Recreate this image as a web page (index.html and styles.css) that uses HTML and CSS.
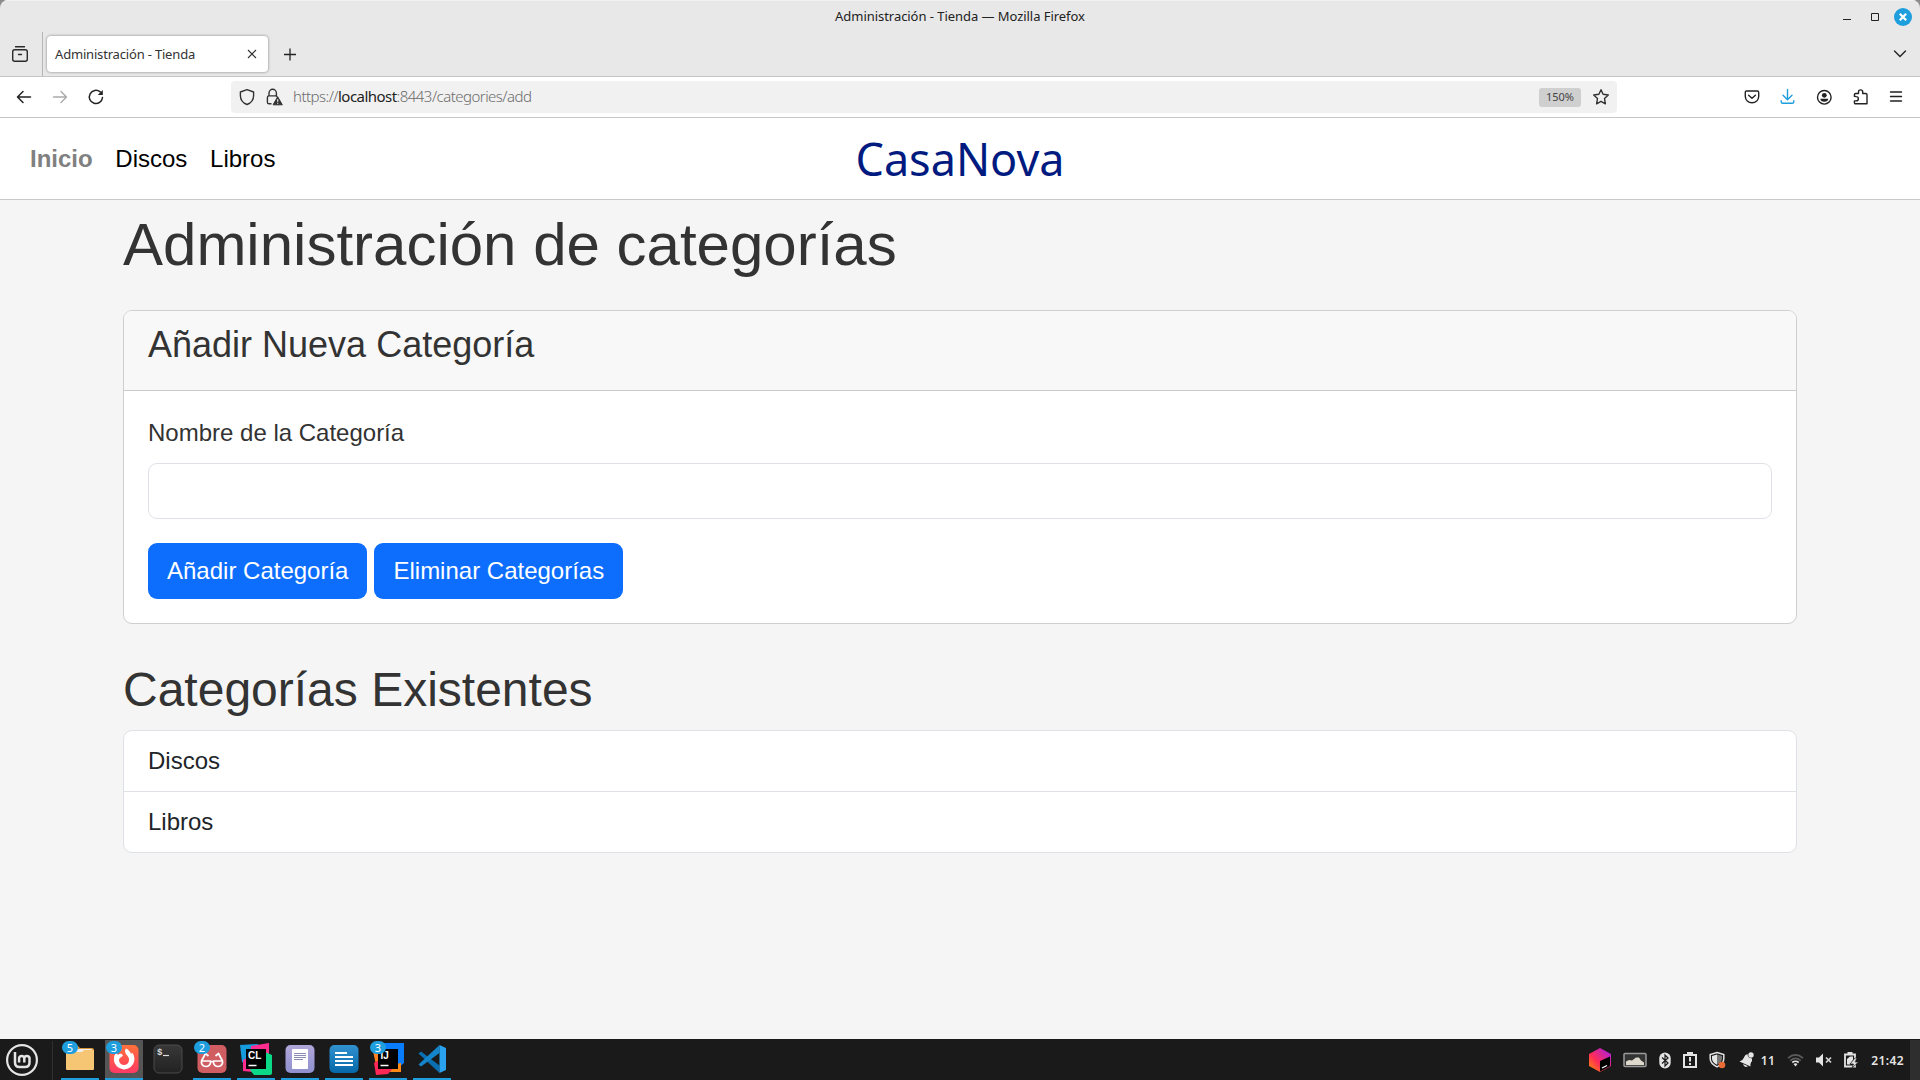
FILE: index.html
```html
<!DOCTYPE html>
<html lang="es">
<head>
<meta charset="utf-8">
<title>Administración - Tienda</title>
<link rel="stylesheet" href="styles.css">
</head>
<body>
<div class="screen">
  <div class="window">
    <header class="titlebar">
      <span class="title">Administración - Tienda — Mozilla Firefox</span>
      <div class="controls">
        <svg width="20" height="20" viewBox="0 0 20 20"><path d="M6 12.5h8" stroke="#222" fill="none"/></svg>
        <svg width="20" height="20" viewBox="0 0 20 20"><path d="M6.5 6.5h7v7h-7z" stroke="#222" fill="none"/></svg>
        <svg width="20" height="20" viewBox="0 0 20 20"><circle cx="10" cy="10" r="9" fill="#1f9ede"/><path d="M6.8 6.8l6.4 6.4M13.2 6.8l-6.4 6.4" stroke="#fff" stroke-width="2.2"/></svg>
      </div>
    </header>
    <div class="tabs">
      <div class="tabs-view"><svg width="20" height="20" viewBox="0 0 20 20" fill="none" stroke="#2a2a2a" stroke-width="1.4" stroke-linecap="round"><path d="M5.5 2.7h9"/><rect x="2.7" y="5.7" width="14.6" height="11.6" rx="2"/><path d="M8.500 10.500h3"/></svg></div>
      <div class="tab"><span class="tab-label">Administración - Tienda</span><svg width="12" height="12" viewBox="0 0 12 12" stroke="#333" stroke-width="1.1" fill="none"><path d="M2 2l8 8M10 2l-8 8"/></svg></div>
      <svg class="new-tab" width="14" height="14" viewBox="0 0 14 14" stroke="#222" stroke-width="1.3" fill="none"><path d="M1 7.500h12M7 1.500v12"/></svg>
      <svg class="all-tabs" width="16" height="16" viewBox="0 0 16 16" stroke="#222" stroke-width="1.4" fill="none" stroke-linecap="round"><path d="M2.500 5l5.500 5.500L13.500 5"/></svg>
    </div>
    <div class="toolbar">
      <div class="nav-buttons">
        <svg width="20" height="20" viewBox="0 0 20 20" fill="none" stroke="#222" stroke-width="1.5" stroke-linecap="round" stroke-linejoin="round"><path d="M16.500 10h-13M9 4.500L3.500 10 9 15.500"/></svg>
        <svg width="20" height="20" viewBox="0 0 20 20" fill="none" stroke="#aaa" stroke-width="1.400" stroke-linecap="round" stroke-linejoin="round"><path d="M3.500 10h13M11 4.500l5.500 5.500-5.500 5.500"/></svg>
        <svg width="20" height="20" viewBox="0 0 20 20" fill="none" stroke="#222" stroke-width="1.500" stroke-linecap="round"><path d="M16.500 10.500a6.600 6.600 0 1 1-2.300-5.600"/><path d="M16.800 3v5h-5z" fill="#222" stroke="none"/></svg>
      </div>
      <div class="urlbar">
        <svg width="20" height="20" viewBox="0 0 20 20" fill="none" stroke="#333" stroke-width="1.400" stroke-linejoin="round"><path d="M10 2.600L16.600 5v3.800c0 4-2.600 7.200-6.600 8.700-4-1.500-6.600-4.700-6.600-8.700V5z"/></svg>
        <svg width="20" height="20" viewBox="0 0 20 20" fill="none" stroke="#333" stroke-width="1.400"><path d="M7.500 16.800H5q-1.600 0-1.600-1.600V10.500q0-1.600 1.600-1.600h6.500q1.500 0 1.700 1.300M5 8.900V6a3.700 3.700 0 0 1 7.400 0v2.900"/><path d="M13.700 9.800l4.600 8H9.100z" fill="#333" stroke-linejoin="round" stroke-width="1"/><path d="M13.700 12.200v2.500M13.700 15.700v1" stroke="#f1f1f1" stroke-width="1.200"/></svg>
        <span class="url">https://<b>localhost</b>:8443/categories/add</span>
        <span class="zoom">150%</span>
        <svg width="20" height="20" viewBox="0 0 20 20" fill="none" stroke="#333" stroke-width="1.400" stroke-linejoin="round"><path d="M10 2.700l2.100 4.600 5.200.7-3.800 3.600.9 5.200L10 14.300l-4.400 2.500.9-5.200L2.700 8l5.200-.7z"/></svg>
      </div>
      <div class="tools">
        <svg width="20" height="20" viewBox="0 0 20 20" fill="none" stroke="#222" stroke-width="1.400" stroke-linecap="round" stroke-linejoin="round"><path d="M4.700 4h10.600q1.400 0 1.400 1.400v4.200a6.700 6.200 0 0 1-13.400 0V5.400Q3.300 4 4.700 4z"/><path d="M6.600 8.300L10 11.300l3.400-3"/></svg>
        <svg width="20" height="20" viewBox="0 0 20 20" fill="none" stroke="#1f9ede" stroke-width="1.400" stroke-linecap="round" stroke-linejoin="round"><path d="M9.500 2.500v10M5 8.200l4.500 4.500L14 8.200M3.200 13.800v1q0 1.500 1.500 1.500h9.600q1.500 0 1.500-1.500v-1"/></svg>
        <svg width="20" height="20" viewBox="0 0 20 20"><circle cx="10.300" cy="10.300" r="6.800" fill="none" stroke="#222" stroke-width="1.400"/><circle cx="10.300" cy="8.300" r="2.400" fill="#222"/><path d="M6.300 11.700h8q-.3 3-4 3.100-3.700-.1-4-3.100z" fill="#222"/></svg>
        <svg width="20" height="20" viewBox="0 0 20 20" fill="none" stroke="#222" stroke-width="1.400" stroke-linejoin="round"><path d="M4.400 9.300V7.700q0-1.200 1.200-1.200h2.900V5a2 2 0 0 1 4.200 0v1.500h3q1.300 0 1.300 1.200v9.100H5.500q-1.100 0-1.100-1.200v-1.700h1.800a1.900 1.900 0 0 0 0-4.300z"/></svg>
        <svg width="20" height="20" viewBox="0 0 20 20" fill="none" stroke="#222" stroke-width="1.400" stroke-linecap="round"><path d="M4.500 5h11M4.500 9.500h11M4.500 14h11"/></svg>
      </div>
    </div>
    <main class="page">
      <nav class="site-nav">
        <div class="links"><a class="active">Inicio</a><a>Discos</a><a>Libros</a></div>
        <span class="brand">CasaNova</span>
        <div class="links"></div>
      </nav>
      <div class="container">
        <h1>Administración de categorías</h1>
        <section class="card">
          <div class="card-header"><h3>Añadir Nueva Categoría</h3></div>
          <form class="card-body">
            <label for="name">Nombre de la Categoría</label>
            <input id="name" type="text">
            <div class="actions"><button type="button">Añadir Categoría</button><button type="button">Eliminar Categorías</button></div>
          </form>
        </section>
        <h2>Categorías Existentes</h2>
        <ul class="list"><li>Discos</li><li>Libros</li></ul>
      </div>
    </main>
  </div>
  <footer class="panel">
    <svg class="menu" width="34" height="34" viewBox="0 0 34 34" fill="none" stroke="#e4e4e4"><circle cx="17" cy="17" r="14.900" stroke-width="2.200"/><path d="M10 9v10.500q0 4.500 4.500 4.500h5.500q4.500 0 4.500-4.500V15a2.700 2.700 0 0 0-5.200 0v4.500M19.300 19.500V15a2.700 2.700 0 0 0-5.200 0v4.500" stroke-width="2.500"/></svg>
    <div class="tasks">
      <div class="task open"><svg width="30" height="30" viewBox="0 0 30 30"><path d="M1 3q0-2 2-2h9l3 3h12q2 0 2 2v5H1z" fill="#d8973a"/><rect x="3" y="5" width="24" height="6" rx="1" fill="#eee"/><path d="M1 8h16l2-2h10v19q0 1-1 1H2q-1 0-1-1z" fill="#f7c675"/></svg><i class="count">5</i></div>
      <div class="task open focused"><svg width="30" height="30" viewBox="0 0 30 30"><defs><linearGradient id="ff" x1="0" y1="0" x2="0" y2="1"><stop offset="0" stop-color="#ff7139"/><stop offset="1" stop-color="#ff3a65"/></linearGradient></defs><rect x=".5" y="1" width="29" height="28" rx="5" fill="url(#ff)"/><path d="M17 4.500q4 2 5 5.500l1-1.500q3 3.500 2.300 8a10.300 10.300 0 0 1-20.500-1q0-4 2.700-7.500l1.300 3q1.500-1.500 3.700-1.300l1.500 1.800-1.500 1.500q-2 .5-2.500 2.500a5 5 0 0 0 10 1q.3-3-1.800-5-1.800-2-2.200-4-.3-1.600 1-3z" fill="#fff"/></svg><i class="count">3</i></div>
      <div class="task"><svg width="30" height="30" viewBox="0 0 30 30"><defs><linearGradient id="te" x1="0" y1="0" x2="0" y2="1"><stop offset="0" stop-color="#383838"/><stop offset="1" stop-color="#222"/></linearGradient></defs><rect x="1" y="1" width="28" height="28" rx="5" fill="url(#te)" stroke="#4a4a4a"/><text x="4" y="11" class="prompt">$</text><path d="M10 11.500h6" stroke="#ddd" stroke-width="1.200"/></svg></div>
      <div class="task open"><svg width="30" height="30" viewBox="0 0 30 30"><rect x=".5" y="1" width="29" height="28" rx="5" fill="#cf5d61"/><g fill="none" stroke="#fff" stroke-width="1.700" stroke-linejoin="round"><path d="M4.500 17h9v2q-1 3.500-4.500 3.500T4.500 19zM16.500 17h9v2q-1 3.500-4.500 3.500T16.500 19zM13.500 18q1.500-1 3 0M4.500 17l4-7.500 3 2.500M25.500 17l-4-7.500-3 2.500"/></g></svg><i class="count">2</i></div>
      <div class="task open"><svg width="32" height="32" viewBox="0 0 32 32"><path d="M0 2l18-1 3 13-12 8-7-3z" fill="#159bde"/><path d="M11 3L29 0v12l-9 9-10-4z" fill="#ff2d90"/><path d="M3 17l8-4 9 9-7 7-10-1z" fill="#ff2d90"/><path d="M25 9l7 3v18q0 2-2 2H14l-4-5z" fill="#0bd987"/><rect x="6" y="6" width="20" height="20" fill="#000"/><text x="8" y="16" class="ide">CL</text><path d="M8.500 22.500h8" stroke="#fff" stroke-width="1.500"/></svg></div>
      <div class="task open"><svg width="30" height="30" viewBox="0 0 30 30"><defs><linearGradient id="no" x1="0" y1="0" x2="0" y2="1"><stop offset="0" stop-color="#b1a7da"/><stop offset="1" stop-color="#8f91cf"/></linearGradient></defs><rect x=".5" y="1" width="29" height="28" rx="5" fill="url(#no)"/><rect x="7" y="5" width="16" height="20" rx="1" fill="#fff"/><path d="M9 9.500h12M9 11.500h12M9 13.500h12M9 15.500h9" stroke="#898bb5"/></svg></div>
      <div class="task open"><svg width="30" height="30" viewBox="0 0 30 30"><defs><linearGradient id="li" x1="0" y1="0" x2="0" y2="1"><stop offset="0" stop-color="#3292d0"/><stop offset="1" stop-color="#0668a8"/></linearGradient></defs><rect x=".5" y="1" width="29" height="28" rx="5" fill="url(#li)"/><path d="M6 9h12M6 13h18M6 17h18M6 21h18" stroke="#fff" stroke-width="2"/></svg></div>
      <div class="task open"><svg width="32" height="32" viewBox="0 0 32 32"><path d="M12 0h20v20l-6 5-14-4z" fill="#087cfa"/><path d="M1 8l9-4 6 10-12 8z" fill="#ff8120"/><path d="M20 22l9-2v9H18z" fill="#ff8a16"/><path d="M2 20l8-5 12 9-6 7-12 1z" fill="#fe2857"/><rect x="6" y="6" width="20" height="20" fill="#000"/><text x="8.500" y="16" class="ide">IJ</text><path d="M8.500 22.500h8" stroke="#fff" stroke-width="1.500"/></svg><i class="count">3</i></div>
      <div class="task open"><svg width="30" height="30" viewBox="0 0 30 30"><path d="M1.500 9.500L4 7.500l18.500 14v7.500z" fill="#0a6fb0"/><path d="M1.500 20.500L22.500 1v8L4 22.500z" fill="#1484cb"/><path d="M22.500 1L29 4v22l-6.500 3z" fill="#29a3ef"/></svg></div>
    </div>
    <div class="tray">
      <svg width="22" height="24" viewBox="0 0 22 24"><defs><linearGradient id="jb" x1="0" y1="1" x2="1" y2="0"><stop offset="0" stop-color="#ff9500"/><stop offset=".4" stop-color="#ff2d55"/><stop offset="1" stop-color="#a51cf0"/></linearGradient></defs><path d="M11 0l11 6v12l-11 6L0 18V6z" fill="url(#jb)"/><path d="M11 13l10-4.500V18l-10 5.500z" fill="#000"/><path d="M13 20l5-2.500" stroke="#fff" stroke-width="1.300"/></svg>
      <svg width="24" height="16" viewBox="0 0 24 16"><rect x="1" y="1.500" width="22" height="13" rx="1" fill="#333" stroke="#9a9a9a" stroke-width="1.500"/><path d="M3 13V9.500l3-1.500 3 .5 4-3h3l2 3 3 2V13z" fill="#ddd8cb"/></svg>
      <svg width="12" height="17" viewBox="0 0 12 17"><rect x=".3" y=".5" width="11.400" height="16" rx="5.700" fill="#e4e4e4"/><path d="M3 5.500l6 5.500-3 3V3l3 3-6 5.500" fill="none" stroke="#1a1a1a" stroke-width="1.200"/></svg>
      <svg width="14" height="16" viewBox="0 0 14 16"><path d="M1 3h12v12H1z" fill="none" stroke="#e4e4e4" stroke-width="2"/><path d="M4 0h6v4H4z" fill="#e4e4e4"/><path d="M7 5v4.500M7 11v2" stroke="#e4e4e4" stroke-width="2"/></svg>
      <svg width="18" height="18" viewBox="0 0 18 18"><path d="M8 1.500L14.800 3.500v4.300q0 4.700-6.800 8-6.800-3.300-6.800-8V3.500z" fill="none" stroke="#e4e4e4" stroke-width="1.500"/><path d="M8 3.500v10.200q-5-2.500-5-6.500V5z" fill="#e4e4e4"/><path d="M8 3.500v10.200q5-2.500 5-6.500V5z" fill="#777"/><circle cx="13" cy="14" r="3.300" fill="#e86b35"/></svg>
      <svg width="15" height="16" viewBox="0 0 15 16"><path d="M.5 9.500q3-.5 4.200-3.500Q6 2.500 8.600 2.300q0 4 4.400 4.200.5 2-1 4-1 1.500-.5 4z" fill="#e4e4e4"/><circle cx="12" cy="3" r="2.700" fill="#e4e4e4"/><path d="M4 12l5 2.300q-3.800 2.200-5-2.300z" fill="#e4e4e4"/></svg>
      <span class="num">11</span>
      <svg width="17" height="14" viewBox="0 0 17 14" fill="none" stroke-width="1.700"><path d="M1 5.200q7.500-6.500 15 0M3.300 7.600q5.200-4.500 10.400 0" stroke="#5d5d5d"/><path d="M5.300 9.500q3.200-2.500 6.400 0" stroke="#e4e4e4"/><path d="M6.500 11l2 2.500 2-2.500q-2-1.300-4 0z" fill="#e4e4e4"/></svg>
      <svg width="16" height="14" viewBox="0 0 16 14"><path d="M0 4.500h3L7 .5v13l-4-4H0z" fill="#e4e4e4"/><path d="M10 4.500l5 5M15 4.500l-5 5" stroke="#d4d4d4" stroke-width="1.700"/></svg>
      <svg width="15" height="16" viewBox="0 0 15 16"><path d="M1 2.500h10v12H1z" fill="none" stroke="#e4e4e4" stroke-width="1.800"/><path d="M3.500 0h5v2.500h-5zM3 7l3-2.500h3V8l-3 4.500H3z" fill="#e4e4e4"/><path d="M11 6l-5 6h3.500L8 16l6.500-6H11l2-4z" fill="#e4e4e4" stroke="#1a1a1a" stroke-width=".7"/></svg>
      <span class="clock">21:42</span>
      <div class="show-desktop"></div>
    </div>
  </footer>
</div>
</body>
</html>
```
FILE: styles.css
```css
* { box-sizing: border-box; }
body { margin: 0; overflow: hidden; background: #8b8b8b; font-family: "Noto Sans", sans-serif; }
svg { display: block; flex: none; }
.screen { width: 1920px; height: 1080px; display: flex; flex-direction: column; }
.window { height: 1039px; display: flex; flex-direction: column; border-radius: 8px 8px 0 0; overflow: hidden; background: #e8e8e8; }

/* browser chrome */
.titlebar { height: 32px; display: grid; grid-template-columns: 1fr auto 1fr; align-items: center; border-top: 1px solid #f2f2f2; }
.title { grid-column: 2; padding-bottom: 2px; font-size: 13px; color: #222; white-space: nowrap; letter-spacing: -.05px; }
.controls { justify-self: end; display: flex; gap: 8px; padding-right: 7px; }
.tabs { height: 45px; display: flex; align-items: center; border-bottom: 1px solid #c6c6c6; }
.tabs-view { width: 43px; height: 44px; padding-left: 10px; display: flex; align-items: center; border-right: 1px solid #b5b5b5; }
.tab { width: 221px; height: 36px; margin-left: 4px; padding: 0 10px 0 8px; display: flex; align-items: center; justify-content: space-between; border-radius: 4px; background: #fff; box-shadow: 0 0 3px rgba(0,0,0,.45); }
.tab-label { font-size: 13px; color: #333; white-space: nowrap; letter-spacing: -.18px; }
.new-tab { margin-left: 15px; }
.all-tabs { margin-left: auto; margin-right: 12px; }
.toolbar { height: 41px; display: flex; align-items: center; padding: 0 14px; background: #fff; border-bottom: 1px solid #c6c6c6; }
.nav-buttons, .tools { display: flex; gap: 16px; }
.urlbar { width: 1386px; height: 32px; margin-left: 125px; padding: 0 6px; display: flex; align-items: center; border-radius: 4px; background: #f1f1f1; }
.urlbar svg + svg { margin-left: 7px; }
.url { margin-left: 9px; padding-bottom: 2px; font-size: 15px; font-weight: 300; color: #6c6c6c; letter-spacing: -.53px; white-space: nowrap; }
.url b { font-weight: 400; color: #222; }
.zoom { width: 42px; height: 19px; margin-left: auto; margin-right: 10px; border-radius: 3px; background: #cfcfcf; color: #444; font-size: 11px; line-height: 18px; text-align: center; }
.tools { margin-left: auto; }

/* web page */
.page { flex: 1; background: #f5f5f5; color: #333; font-family: "Liberation Sans", Arial, sans-serif; font-size: 24px; line-height: 36px; }
.site-nav { height: 82px; padding: 0 30px; display: grid; grid-template-columns: 1fr auto 1fr; align-items: center; background: #fff; border-bottom: 1px solid #c9c9c9; }
.links { display: flex; gap: 22.7px; color: #000; }
.active { font-weight: bold; color: #808080; }
.brand { padding-top: 1px; font: 45px/60px "Noto Sans", sans-serif; color: #001a80; }
.container { width: 1674px; margin: 0 auto; padding-top: 9px; }
h1, h2, h3 { margin: 0; font-weight: 400; line-height: 1.2; }
h1 { font-size: 60px; margin-bottom: 29px; }
h2 { font-size: 48px; margin: 37px 0 11px; }
h3 { font-size: 36px; margin-bottom: 12px; }
.card { border: 1px solid #cfcfcf; border-radius: 9px; background: #fff; overflow: hidden; }
.card-header { height: 80px; padding: 12px 24px; background: #f8f8f8; border-bottom: 1px solid #cacaca; }
.card-body { padding: 24px; display: flex; flex-direction: column; }
.card-body label { margin-bottom: 12px; }
.card-body input { height: 56px; margin-bottom: 24px; border: 1px solid #dee2e6; border-radius: 9px; background: #fff; }
.actions { display: flex; gap: 7px; }
button { height: 56px; padding: 0 19px; border: 0; border-radius: 9px; background: #0d6efd; color: #fff; font: 24px/36px "Liberation Sans", Arial, sans-serif; }
.list { margin: 0; padding: 0; list-style: none; background: #fff; border: 1px solid #dee2e6; border-radius: 9px; color: #212529; }
.list li { height: 60px; padding: 12px 24px; }
.list li + li { height: 61px; border-top: 1px solid #dee2e6; }

/* desktop panel */
.panel { height: 41px; display: flex; align-items: center; background: #1a1a1a; color: #e4e4e4; }
.menu { margin-left: 5px; }
.tasks { height: 39px; margin: 2px 0 0 13px; padding-left: 8px; display: flex; gap: 6px; border-left: 1px solid #303030; }
.task { position: relative; width: 38px; height: 40px; margin-top: -1px; padding-bottom: 2px; display: flex; justify-content: center; align-items: center; }
.open { border-bottom: 2px solid #1f9ede; padding-bottom: 0; }
.focused { background: #555; }
.count { position: absolute; left: 1px; top: 1px; width: 16px; height: 13px; border-radius: 7px; background: #1f9ede; color: #fff; font: 11px/13px "Noto Sans", sans-serif; text-align: center; }
.prompt { font: bold 9px "Liberation Mono", monospace; fill: #ddd; }
.ide { font: bold 10px "Liberation Sans", sans-serif; fill: #fff; }
.tray { height: 41px; padding-top: 1px; margin-left: auto; display: flex; align-items: center; gap: 12px; }
.num, .clock { font-size: 12px; font-weight: 600; letter-spacing: .4px; }
.num { margin-left: -5px; }
.show-desktop { width: 10px; height: 41px; margin-left: -6px; background: #2e2e2e; }
```
